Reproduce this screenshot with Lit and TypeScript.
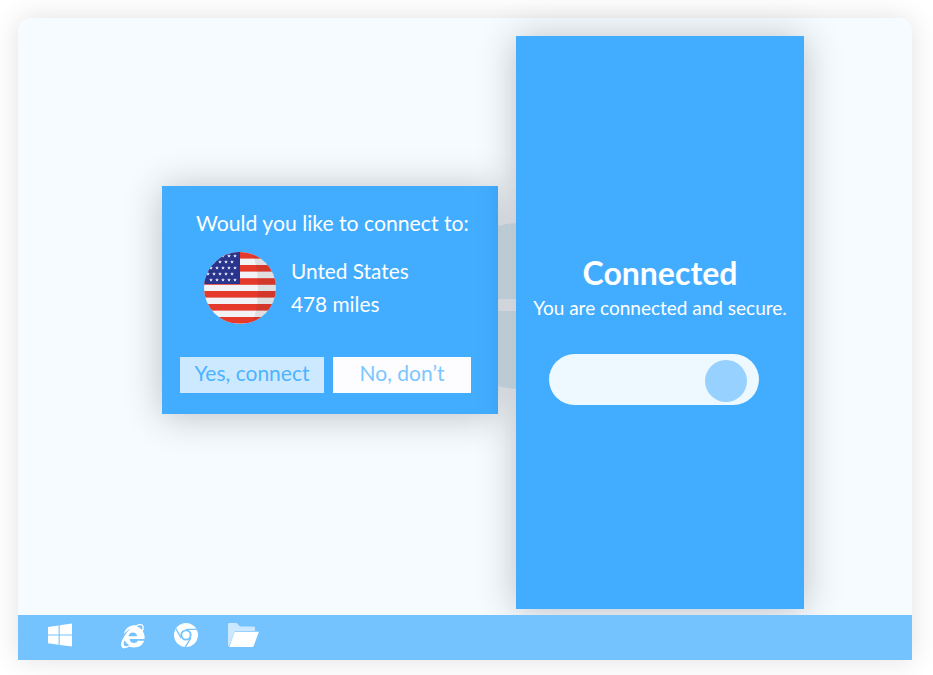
import { LitElement, html, css, svg } from "lit";
import { customElement } from "lit/decorators.js";

const star = (cx: number, cy: number, r: number) => {
  const pts: string[] = [];
  for (let i = 0; i < 10; i++) {
    const a = (Math.PI / 5) * i - Math.PI / 2;
    const d = i % 2 ? r * 0.42 : r;
    pts.push(`${(cx + d * Math.cos(a)).toFixed(2)},${(cy + d * Math.sin(a)).toFixed(2)}`);
  }
  return svg`<polygon points=${pts.join(" ")} fill="#eceef5" />`;
};

const flagStars = () => {
  const out = [];
  for (let row = 0; row < 5; row++) {
    const odd = row % 2 === 1;
    for (let col = 0; col < 5; col++) {
      out.push(star((odd ? 4 : 7) + col * 6, 4 + row * 6, 2));
    }
  }
  return out;
};

const flag = () => html`
  <svg class="flag" width="72" height="72" viewBox="0 0 72 72">
    <defs>
      <clipPath id="round"><circle cx="36" cy="36" r="36" /></clipPath>
    </defs>
    <g clip-path="url(#round)">
      <rect width="72" height="72" fill="#f2f3f7" />
      ${[0, 13, 26.2, 39, 52, 65].map(
        (y) => svg`<rect y=${y} width="72" height="6.6" fill="#e5392b" />`
      )}
      <rect width="36" height="32" fill="#29348c" />
      ${flagStars()}
      <path d="M48 0c8 18 8 54 0 72h24V0z" fill="#3a2a2a" opacity=".1" />
    </g>
  </svg>
`;

const windowsIcon = html`
  <svg width="24" height="24" viewBox="0 0 24 24" fill="#fff">
    <path d="M0 3.9 10.6 2.4V11.4H0zM11.7 2.2 24 .4V11.4H11.7zM0 12.6H10.6V21.7L0 20.2zM11.7 12.6H24V23.6L11.7 21.9z" />
  </svg>
`;

const ieIcon = html`
  <svg width="26" height="28" viewBox="1.500 1.500 22 24.500" fill="none">
    <path
      d="M13.6 5.2c-4.700 0-7.900 3.100-9.300 8 1.700-2.200 3.600-3.800 5.800-5-2.700 2.600-5.100 5.800-7 9.900-1.200 2.600-1.600 5.500.1 6.700 1.600 1.100 4 .3 6-1 1.300.5 2.700.8 4.200.8 4.500 0 7.600-2 8.900-5.800h-5.600c-.7 1.200-1.900 2-3.400 2-2.100 0-3.700-1.500-3.700-3.600h13c.3-2.400-.2-4.700-1.500-6.600 1-2.100 1.300-4.500.1-5.700-1.300-1.300-3.800-.8-6 .3-.5 0-1-.1-1.600 0zm2.100 1c1.500-.7 3.400-1.300 4.500-.5.9.7.7 2.200 0 3.700-1-1.400-2.600-2.600-4.500-3.200zM8.600 14.800c.2-1.900 1.800-3.300 3.800-3.300s3.600 1.400 3.700 3.300zM5 18.400c1 1.900 2.400 3.300 4.300 4.300-1.500.8-3.200 1.200-4.200.5-1.100-.8-.8-2.800-.1-4.800z"
      fill="#fff"
    />
  </svg>
`;

const chromeIcon = html`
  <svg width="24" height="24" viewBox="0 0 24 24">
    <circle cx="12" cy="12" r="12" fill="#fff" />
    <circle cx="12" cy="12" r="5.6" fill="#74c3ff" />
    <circle cx="12" cy="12" r="3.7" fill="#fff" />
    <path d="M12 6.400H23M7.100 14.800 1.700 5.500M16.900 14.800 11.300 24" stroke="#74c3ff" stroke-width="1.300" fill="none" />
  </svg>
`;

const folderIcon = html`
  <svg width="31" height="24" viewBox="0 0 31 24">
    <path d="M0 1.500C0 .6.600 0 1.500 0H8.500L12 3.500H25.500C26.400 3.500 27 4.100 27 5V8H7L1 23H0z" fill="#cbe8ff" />
    <path d="M6.800 8.800H31L25.500 23.200C25.300 23.700 24.900 24 24.400 24H1.200z" fill="#fff" />
  </svg>
`;

@customElement("app-root")
export class AppRoot extends LitElement {
  static styles = css`
    :host {
      display: block;
      width: 933px;
      height: 675px;
      background: #fff;
      font-family: Lato, "Open Sans", sans-serif;
      overflow: hidden;
    }
    .page {
      height: 675px;
      padding: 18px 21px 15px 18px;
      box-sizing: border-box;
    }
    .window {
      position: relative;
      height: 642px;
      display: flex;
      flex-direction: column;
      background: #f6fbff;
      border-radius: 12px 12px 0 0;
      box-shadow: 0 0 28px rgba(0, 0, 0, 0.12);
    }
    .desktop {
      flex: 1;
    }
    .globe {
      position: absolute;
      left: 419px;
      top: 205px;
      width: 166px;
      height: 166px;
      border-radius: 50%;
      background: linear-gradient(#dcedf9 0 76px, transparent 76px 88px, #dcedf9 88px);
    }
    .panel {
      position: absolute;
      left: 498px;
      top: 18px;
      width: 288px;
      height: 573px;
      box-sizing: border-box;
      padding-top: 217px;
      display: flex;
      flex-direction: column;
      align-items: center;
      background: #42adff;
      color: #fff;
      box-shadow: 0 2px 36px rgba(0, 0, 0, 0.24);
    }
    .panel h1 {
      margin: 0;
      font-size: 32px;
      line-height: 40px;
      font-weight: 700;
    }
    .panel p {
      margin: 1px 0 0;
      font-size: 19px;
      line-height: 28px;
    }
    .toggle {
      margin: 32px 12px 0 0;
      width: 210px;
      height: 51px;
      box-sizing: border-box;
      padding: 6px 12px 3px;
      display: flex;
      justify-content: flex-end;
      border-radius: 26px;
      background: #edf8ff;
    }
    .knob {
      width: 42px;
      height: 42px;
      border-radius: 50%;
      background: #97d1ff;
    }
    .dialog {
      position: absolute;
      left: 144px;
      top: 168px;
      width: 336px;
      height: 228px;
      box-sizing: border-box;
      padding: 22px 18px 0;
      background: #42adff;
      color: #fff;
      box-shadow: 0 2px 36px rgba(0, 0, 0, 0.24);
    }
    .dialog h2 {
      margin: 0;
      padding-left: 16px;
      font-size: 21.2px;
      line-height: 30px;
      font-weight: 400;
      white-space: nowrap;
    }
    .place {
      margin-top: 14px;
      padding-left: 24px;
      display: flex;
      align-items: center;
      gap: 15px;
      font-size: 20.8px;
      line-height: 33px;
    }
    .place-text {
      padding-bottom: 2px;
    }
    .flag {
      display: block;
    }
    .actions {
      margin-top: 33px;
      display: flex;
      gap: 9px;
    }
    .actions button {
      height: 36px;
      padding: 0 0 5px;
      border: 0;
      font: inherit;
      font-size: 21px;
    }
    .yes {
      width: 144px;
      background: #cce9ff;
      color: #4db3ff;
    }
    .no {
      width: 138px;
      background: #fdfdff;
      color: #7cc6ff;
    }
    .taskbar {
      position: relative;
      height: 45px;
      box-sizing: border-box;
      display: flex;
      align-items: center;
      padding: 0 0 5px 30px;
      background: #74c3ff;
    }
    .taskbar svg {
      display: block;
    }
    .start {
      margin-right: 48px;
    }
    .ie {
      margin-right: 28px;
    }
    .chrome {
      margin-right: 30px;
    }
  `;

  render() {
    return html`
      <div class="page">
        <div class="window">
          <div class="desktop"></div>
          <div class="globe"></div>
          <section class="dialog">
            <h2>Would you like to connect to:</h2>
            <div class="place">
              ${flag()}
              <div class="place-text">Unted States<br />478 miles</div>
            </div>
            <div class="actions">
              <button class="yes">Yes, connect</button>
              <button class="no">No, don’t</button>
            </div>
          </section>
          <section class="panel">
            <h1>Connected</h1>
            <p>You are connected and secure.</p>
            <div class="toggle"><div class="knob"></div></div>
          </section>
          <div class="taskbar">
            <span class="start">${windowsIcon}</span>
            <span class="ie">${ieIcon}</span>
            <span class="chrome">${chromeIcon}</span>
            <span>${folderIcon}</span>
          </div>
        </div>
      </div>
    `;
  }
}
